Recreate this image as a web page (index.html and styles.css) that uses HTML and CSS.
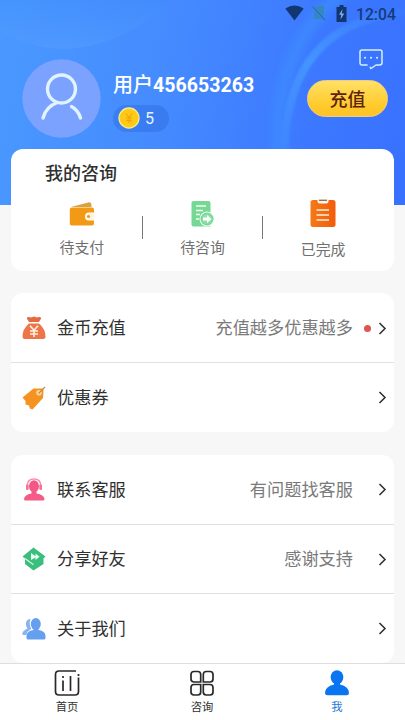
FILE: index.html
```html
<!DOCTYPE html>
<html lang="zh-CN">
<head>
<meta charset="utf-8">
<meta name="viewport" content="width=device-width, initial-scale=1">
<title>我的</title>
<link rel="stylesheet" href="styles.css">
</head>
<body>
<div class="screen">
  <header class="hero">
    <svg class="hero-art" viewBox="0 0 405 205" preserveAspectRatio="none" aria-hidden="true">
      <defs>
        <linearGradient id="bowl" x1="0" y1="0" x2="0" y2="1"><stop offset="0" stop-color="#3b8bfb" stop-opacity=".3"/><stop offset="1" stop-color="#5aa0ff" stop-opacity=".4"/></linearGradient>
        <linearGradient id="glow" gradientUnits="userSpaceOnUse" x1="290" y1="150" x2="370" y2="0"><stop offset="0" stop-color="#459bff" stop-opacity=".25"/><stop offset=".5" stop-color="#459bff" stop-opacity=".8"/><stop offset="1" stop-color="#459bff" stop-opacity=".15"/></linearGradient>
        <filter id="soft" x="-20%" y="-20%" width="140%" height="140%"><feGaussianBlur stdDeviation="3.500"/></filter>
        <filter id="edge" x="-20%" y="-20%" width="140%" height="140%"><feGaussianBlur stdDeviation="1"/></filter>
      </defs>
      <path d="M0 31Q34 50 68 49Q125 45 170 0H0Z" fill="url(#bowl)"/>
      <path d="M278 155C274 90 295 25 345 -8" fill="none" stroke="#3a90ff" stroke-opacity=".6" stroke-width="13" filter="url(#soft)"/>
      <path d="M285 155C285 92 305 20 410 11" fill="none" stroke="url(#glow)" stroke-width="8" filter="url(#edge)"/>
    </svg>
    <div class="status">
      <svg width="19" height="16" viewBox="0 0 19 16"><path d="M.3 3.5Q9.5-2.5 18.7 3.5L9.5 15.4Z" fill="#12366f"/></svg>
      <svg class="sim" width="14" height="16" viewBox="0 0 14 16"><path d="M5.5 1H12V14H2V4.5Z" fill="#3488bd"/><path d="M.5 1.5L13 15.2" stroke="#3c85e8" stroke-width="2.6"/><path d="M.5 1.5L13 15.2" stroke="#296ba6" stroke-width="1.1"/></svg>
      <svg class="battery" width="11" height="17" viewBox="0 0 11 17"><path d="M3.5 0H7.5V2H10.5V17H.5V2H3.5Z" fill="#12366f"/><path d="M6.500 4L3 9.800H5.200L4.500 14.500L8.300 8.500H5.800Z" fill="#7fa9ee"/></svg>
      <time>12:04</time>
    </div>
    <div class="profile">
      <svg class="avatar" width="79" height="79" viewBox="0 0 79 79" fill="none" stroke="#e0f3ff" stroke-width="3.400" stroke-linecap="round"><circle cx="39.500" cy="39.500" r="39.200" fill="#7ba2ff" stroke="none"/><circle cx="39.500" cy="30" r="14"/><path d="M21 59Q24 47.500 35.500 43.500M49.500 47.500Q56.500 51.500 58.500 59"/></svg>
      <div class="identity">
        <h1>用户<span>456653263</span></h1>
        <div class="coins">
          <svg width="22" height="22" viewBox="0 0 22 22"><circle cx="11" cy="11" r="10" fill="#ffc914" stroke="#f6eb91" stroke-width="1.300"/><path d="M7.800 6.500L11 10.500L14.200 6.500M11 10.500V16M8 11H14M8 13.400H14" stroke="#f2a613" stroke-width="1.200" fill="none"/></svg>
          <span>5</span>
        </div>
      </div>
      <div class="actions">
        <svg width="24" height="21" viewBox="0 0 24 21" fill="none" stroke="#d8efff" stroke-width="1.500" stroke-linecap="round" stroke-linejoin="round"><path d="M8 16H3.200Q1 16 1 13.800V3Q1 1 3 1H21Q23 1 23 3V13.800Q23 16 20.800 16H17L12 19.500L11.200 18.300"/><path d="M6 8.700H6.100M12 8.700H12.100M18 8.700H18.100" stroke-width="2"/></svg>
        <button>充值</button>
      </div>
    </div>
  </header>

  <main>
    <section class="card consult">
      <h2>我的咨询</h2>
      <div class="states">
        <div class="state">
          <svg width="28" height="30" viewBox="0 0 28 30"><path d="M3 8L21 3.200Q23 3 23.300 5L23.500 8Z" fill="#dda13b"/><path d="M4 8.500H24Q26 8.500 26 10.500V13.500H21Q17 13.500 17 17.500Q17 21.500 21 21.500H26V24.500Q26 26.500 24 26.500H3.800Q1.800 26.500 1.800 24.500V10.500Q1.800 8.500 4 8.500Z" fill="#f29a16"/><path d="M26 14.500H21.500Q18.300 14.500 18.300 17.500Q18.300 20.500 21.500 20.500H26Z" fill="#fff3dc"/><circle cx="20.500" cy="17.500" r="1.600" fill="#ed9920"/></svg>
          <span>待支付</span>
        </div>
        <i class="bar"></i>
        <div class="state">
          <svg width="28" height="30" viewBox="0 0 28 30"><path d="M4.500 2H19.500Q21.500 2 21.500 4V27.500H4.500Q2.500 27.500 2.500 25.500V4Q2.500 2 4.500 2Z" fill="#76d894"/><path d="M7 7H17M7 11.500H14M7 15.500H11M7 20H10" stroke="#edfff1" stroke-width="1.500"/><circle cx="18" cy="20" r="7.500" fill="#edfff1"/><circle cx="18" cy="20" r="5.700" fill="#8fdfaa" stroke="#76d894" stroke-width="1.600"/><path d="M14 18.500H18V16L22.500 20L18 24V21.500H14Z" fill="#fff"/></svg>
          <span>待咨询</span>
        </div>
        <i class="bar"></i>
        <div class="state last">
          <svg width="28" height="30" viewBox="0 0 28 30"><defs><linearGradient id="clip" x1="0" y1="0" x2="1" y2="0"><stop stop-color="#f47918"/><stop offset="1" stop-color="#f35c0c"/></linearGradient></defs><rect x="1.500" y="2" width="25" height="27" rx="2.500" fill="url(#clip)"/><path d="M8.500 1H19.500V3.500Q19.500 5.500 17.500 5.500H10.500Q8.500 5.500 8.500 3.500Z" fill="#fff3e4"/><path d="M10 2.300H18" stroke="#846b62" stroke-width="1.300"/><path d="M7.500 12H20M7.500 17H20M7.500 22H20" stroke="#fff1db" stroke-width="1.600"/></svg>
          <span>已完成</span>
        </div>
      </div>
    </section>

    <section class="card list">
      <div class="row">
        <svg class="icon" width="26" height="26" viewBox="0 0 26 26"><path d="M8 7L6 3.800Q5.500 1.500 8 2L10 2.500L13 1.500L16 2.500L18 2Q20.500 1.500 20 3.800L18 7Z" fill="#e36b42"/><path d="M8 8.500H18Q24.500 14 24.500 21.500Q24.500 24 22 24H4Q1.500 24 1.500 21.500Q1.500 14 8 8.500Z" fill="#ed754a"/><path d="M9 10.800L13 15.200L17 10.800M13 15.200V22M9 16H17M9 19H17" fill="none" stroke="#fff0df" stroke-width="1.600"/></svg>
        <span class="label">金币充值</span><span class="hint">充值越多优惠越多</span><i class="dot"></i>
        <svg class="chevron" width="9" height="13" viewBox="0 0 9 13"><path d="M1.500 1L7 6.500L1.500 12"/></svg>
      </div>
      <div class="row">
        <svg class="icon" width="26" height="26" viewBox="0 0 26 26"><path d="M1.500 12.500L12.500 3.500L21.500 3.500Q22.800 4 22.500 6L22 13L11.500 24.500L8.800 23.500L8 20.500L4.500 19.500L4.500 16Z" fill="#f69222"/><circle cx="18" cy="7.800" r="2.800" fill="#f8d693"/><path d="M17.500 8.500L24 2" stroke="#bd8c4c" stroke-width="1.100"/></svg>
        <span class="label">优惠券</span><span class="hint"></span><i class="dot off"></i>
        <svg class="chevron" width="9" height="13" viewBox="0 0 9 13"><path d="M1.500 1L7 6.500L1.500 12"/></svg>
      </div>
    </section>

    <section class="card list">
      <div class="row">
        <svg class="icon" width="26" height="26" viewBox="0 0 26 26"><path d="M6.200 12V8.500Q6.500 2 13 2Q19.500 2 19.800 8.500V12" fill="none" stroke="#ff89ad" stroke-width="1.500"/><ellipse cx="13" cy="9.300" rx="5" ry="6" fill="#f25887"/><rect x="5" y="7.500" width="2.700" height="5.500" rx="1" fill="#f47198"/><rect x="18.300" y="7.500" width="2.700" height="5.500" rx="1" fill="#f47198"/><path d="M10.500 13H15.500V16.500Q23 17.500 23.500 22Q23.500 23.500 22 23.500H4.500Q3 23.500 3 22Q3.500 17.500 10.500 16.500Z" fill="#f65b88"/></svg>
        <span class="label">联系客服</span><span class="hint">有问题找客服</span><i class="dot off"></i>
        <svg class="chevron" width="9" height="13" viewBox="0 0 9 13"><path d="M1.500 1L7 6.500L1.500 12"/></svg>
      </div>
      <div class="row">
        <svg class="icon" width="26" height="26" viewBox="0 0 26 26"><path d="M12.500 1.500L24.500 10.500L22.500 12.500V18L12.500 24.500L4 18V12.500L1.500 10.500Z" fill="#39bf7b"/><path d="M4 12.500L12.500 18.800" fill="none" stroke="#ccf5dd" stroke-width="1.300"/><path d="M10 7L14.500 10.200V7.500L18.500 10.800L14.500 14V11.500L10 14Z" fill="#edfff4"/></svg>
        <span class="label">分享好友</span><span class="hint">感谢支持</span><i class="dot off"></i>
        <svg class="chevron" width="9" height="13" viewBox="0 0 9 13"><path d="M1.500 1L7 6.500L1.500 12"/></svg>
      </div>
      <div class="row">
        <svg class="icon" width="26" height="26" viewBox="0 0 26 26"><path d="M8.500 3Q4.500 4 5 8.500Q5.300 11.500 6.500 12.500Q2 14.500 1.500 17V19H5.500Q5.500 15.500 9 14L10.500 12Q7.500 7.500 9.500 3Z" fill="#87b3f0"/><ellipse cx="14.800" cy="8" rx="5.800" ry="6.800" fill="#fff"/><ellipse cx="14.800" cy="8" rx="5" ry="6" fill="#659fee"/><path d="M12.500 12H17.500V14Q24.500 15.200 24.500 20V22Q24.500 23.500 23 23.500H7Q5.500 23.500 5.500 22V20Q5.500 15.200 12.500 14Z" fill="#65a0f0"/></svg>
        <span class="label">关于我们</span><span class="hint"></span><i class="dot off"></i>
        <svg class="chevron" width="9" height="13" viewBox="0 0 9 13"><path d="M1.500 1L7 6.500L1.500 12"/></svg>
      </div>
    </section>
  </main>

  <nav class="tabs">
    <a class="tab">
      <svg width="26" height="28" viewBox="0 0 26 28" fill="none" stroke="#292929" stroke-width="1.700"><path d="M22 2H5Q1.500 2 1.500 5.500V22.500Q1.500 26 5 26H21Q24.500 26 24.500 22.500V8.500M24.500 7V5M9 11.500V22M9 7V9M16.500 7V22"/></svg>
      <span>首页</span>
    </a>
    <a class="tab">
      <svg width="26" height="28" viewBox="0 0 26 28" fill="none" stroke="#292929" stroke-width="1.700"><path d="M5 2.500H8.700Q11.700 2.500 11.700 5.500V13H5Q2 13 2 10V5.500Q2 2.500 5 2.500ZM17.300 2.500H21Q24 2.500 24 5.500V10Q24 13 21 13H14.300V5.500Q14.300 2.500 17.300 2.500ZM5 15.500H11.700V23Q11.700 26 8.700 26H5Q2 26 2 23V18.500Q2 15.500 5 15.500ZM14.300 15.500H21Q24 15.500 24 18.500V23Q24 26 21 26H17.300Q14.300 26 14.300 23Z"/></svg>
      <span>咨询</span>
    </a>
    <a class="tab active">
      <svg width="26" height="28" viewBox="0 0 26 28" fill="#0a74f1"><ellipse cx="13" cy="8.300" rx="6.300" ry="7"/><path d="M10 13H16V15.500Q25 17.500 25 24Q25 26.300 22.500 26.300H3.500Q1 26.300 1 24Q1 17.500 10 15.500Z"/></svg>
      <span>我</span>
    </a>
  </nav>
</div>
</body>
</html>
```
FILE: styles.css
```css
* { box-sizing: border-box; margin: 0; padding: 0; }

body {
  background: #f7f7f7;
  font-family: Roboto, "Noto Sans CJK SC", sans-serif;
  color: #303030;
  overflow: hidden;
}

svg { display: block; flex: none; }

.screen {
  width: 405px;
  height: 720px;
  display: flex;
  flex-direction: column;
  overflow: hidden;
}

.hero {
  position: relative;
  height: 205px;
  flex: none;
  background: linear-gradient(100deg, #4a99ff 0%, #458bff 40%, #3c78ff 75%, #3871ff 100%);
}

.hero-art { position: absolute; inset: 0; width: 100%; height: 100%; }

.status {
  position: relative;
  height: 28px;
  padding: 5px 9px 0 0;
  display: flex;
  align-items: flex-start;
  justify-content: flex-end;
}
.status .sim { margin-left: 8px; }
.status .battery { margin-left: 10px; }
.status time {
  margin-left: 9px;
  width: 40px;
  font-size: 15.7px;
  line-height: 19px;
  font-weight: 500;
  color: #173a78;
  white-space: nowrap;
}

.profile {
  position: relative;
  display: flex;
  padding: 20px 17px 0 22px;
  height: 121px;
}
.avatar { margin-top: 11px; }

.identity { margin: 24px 0 0 12px; flex: 1; }
.identity h1 {
  font-size: 20px;
  line-height: 26px;
  font-weight: 500;
  color: #fff;
  white-space: nowrap;
}
.identity h1 span { font-size: 19.6px; font-weight: 700; }

.coins {
  display: flex;
  align-items: center;
  gap: 5px;
  width: 56px;
  height: 27px;
  margin-top: 6px;
  padding-left: 5px;
  border-radius: 14px;
  background: rgba(42, 105, 220, .42);
  color: #e6f5ff;
  font-size: 16px;
}
.coins svg { margin-top: -1px; }

.actions { display: flex; flex-direction: column; align-items: flex-end; }
.actions svg { margin: 1px 5px 0 0; }
.actions button {
  width: 81px;
  height: 37px;
  margin-top: 10px;
  border: 1px solid #f2cd79;
  border-radius: 19px;
  background: linear-gradient(#ffe066, #ffc928 75%, #fdc22c);
  color: #61220d;
  font: 500 18px/37px Roboto, "Noto Sans CJK SC", sans-serif;
}

main {
  position: relative;
  flex: none;
  height: 514px;
  margin-top: -56px;
  padding: 0 11px;
}

.card { background: #fff; border-radius: 12px; }

.consult { height: 122px; padding-top: 12px; }
.consult h2 {
  padding-left: 34px;
  font-size: 18px;
  line-height: 26px;
  font-weight: 500;
}
.states { display: flex; align-items: flex-start; padding: 12px 11px 0 11px; }
.state {
  flex: 1;
  display: flex;
  flex-direction: column;
  align-items: center;
  color: #707070;
  font-size: 14.9px;
  line-height: 20px;
}
.state span { margin-top: 9px; }
.state.last svg { margin-top: -1px; }
.state.last span { margin-top: 12px; }
.bar { width: 1px; height: 23px; margin-top: 17px; background: #777; }

.list { margin-top: 22px; }
.list + .list { margin-top: 23px; }
.row {
  height: 69.5px;
  display: flex;
  align-items: center;
  padding: 1px 7px 0 10px;
}
.row:first-child { height: 69px; }
.row + .row { border-top: 1px solid #e1e1e1; }
.label { margin-left: 10px; font-size: 17.2px; line-height: 24px; }
.hint { flex: 1; text-align: right; font-size: 17.2px; line-height: 24px; color: #7a7a7a; }
.dot { width: 7px; height: 7px; margin: 0 7px 0 11px; border-radius: 50%; background: #df5454; }
.dot.off { visibility: hidden; }
.chevron { fill: none; stroke: #333; stroke-width: 1.6; }

.tabs {
  position: relative;
  height: 57px;
  flex: none;
  display: flex;
  background: #fff;
  border-top: 1px solid #dedede;
}
.tab {
  flex: 1;
  display: flex;
  flex-direction: column;
  align-items: center;
  padding: 5px 1px 0 0;
  font-size: 11.3px;
  line-height: 16px;
}
.tab span { margin-top: 3px; }
.tab.active { color: #237bd8; }
```
